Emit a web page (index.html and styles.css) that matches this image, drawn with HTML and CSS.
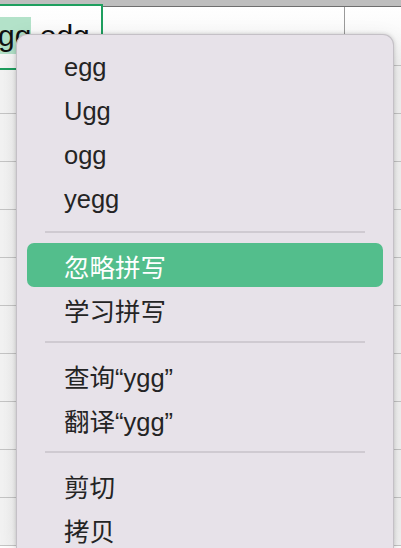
FILE: index.html
```html
<!DOCTYPE html>
<html lang="zh-CN">

<head>
    <meta charset="UTF-8">
    <meta name="viewport" content="width=device-width, initial-scale=1.0">
    <title>拼写菜单</title>
    <link rel="stylesheet" href="styles.css">
</head>

<body>
    <!-- Spreadsheet behind the menu -->
    <div class="sheet">
        <div class="header-bar"></div>
        <div class="first-row">
            <div class="edit-cell">
                <span class="cell-text"><span class="misspelled">ygg</span> edg</span>
            </div>
            <div class="col-line"></div>
        </div>
        <div class="row"></div>
        <div class="row"></div>
        <div class="row"></div>
        <div class="row"></div>
        <div class="row"></div>
        <div class="row"></div>
        <div class="row"></div>
        <div class="row"></div>
        <div class="row"></div>
        <div class="row"></div>
    </div>

    <!-- Context menu -->
    <div class="menu">
        <div class="menu-item">egg</div>
        <div class="menu-item">Ugg</div>
        <div class="menu-item">ogg</div>
        <div class="menu-item">yegg</div>
        <div class="menu-divider"></div>
        <div class="menu-item active">忽略拼写</div>
        <div class="menu-item">学习拼写</div>
        <div class="menu-divider"></div>
        <div class="menu-item">查询“ygg”</div>
        <div class="menu-item">翻译“ygg”</div>
        <div class="menu-divider"></div>
        <div class="menu-item">剪切</div>
        <div class="menu-item">拷贝</div>
    </div>
</body>

</html>
```

FILE: styles.css
```css
body {
    margin: 0;
    width: 401px;
    height: 548px;
    overflow: hidden;
    position: relative;
    background-color: #ffffff;
    font-family: 'Liberation Sans', 'Noto Sans CJK SC', sans-serif;
}

.sheet {
    display: flex;
    flex-direction: column;
}

.header-bar {
    height: 6px;
    background-color: #bebebe;
    border-bottom: 1px solid #6e6e6e;
}

.first-row {
    height: 58px;
    display: flex;
    border-bottom: 1px solid #c6c6c6;
    background: linear-gradient(#ffffff, #f4f4f4);
}

.edit-cell {
    position: relative;
    z-index: 1;
    box-sizing: border-box;
    width: 113px;
    height: 66px;
    margin: -3px 0 0 -10px;
    border: 2px solid #1f9f5f;
    background: linear-gradient(#ffffff, #f6f6f6);
    display: flex;
    align-items: flex-start;
    overflow: hidden;
}

.cell-text {
    display: block;
    margin: 11px 0 0 -9px;
    font-size: 30px;
    line-height: 38px;
    color: #111111;
    white-space: nowrap;
}

.misspelled {
    background-color: #b3e2c9;
    padding: 2px 0;
    text-decoration: underline dotted #e0261f;
    text-decoration-thickness: 3px;
    text-underline-offset: 3px;
}

.col-line {
    width: 1px;
    margin-left: 241px;
    background-color: #9a9a9a;
}

.row {
    height: 47px;
    flex-shrink: 0;
    border-bottom: 1px solid #c6c6c6;
    background: linear-gradient(90deg, #f4f4f4, #ffffff 60%, #f4f4f4);
}

/* Context menu floats over the sheet */
.menu {
    position: absolute;
    z-index: 2;
    left: 16px;
    top: 34px;
    width: 378px;
    height: 514px;
    box-sizing: border-box;
    padding: 10px 10px 0;
    overflow: hidden;
    background-color: #e7e2e9;
    border: 1px solid #c4c0c6;
    border-bottom: none;
    border-radius: 11px 11px 0 0;
    box-shadow: 0 0 4px rgba(0, 0, 0, 0.18), 0 8px 24px rgba(0, 0, 0, 0.12);
    display: flex;
    flex-direction: column;
}

.menu-item {
    height: 44px;
    flex-shrink: 0;
    display: flex;
    align-items: center;
    padding-left: 37px;
    font-size: 25.5px;
    color: #242424;
    border-radius: 7px;
}

.menu-item.active {
    background-color: #53be8c;
    color: #ffffff;
}

.menu-divider {
    height: 22px;
    flex-shrink: 0;
    margin: 0 18px;
    display: flex;
    align-items: center;
}

.menu-divider::before {
    content: '';
    flex: 1;
    height: 2px;
    background-color: #cfcad1;
}
```
